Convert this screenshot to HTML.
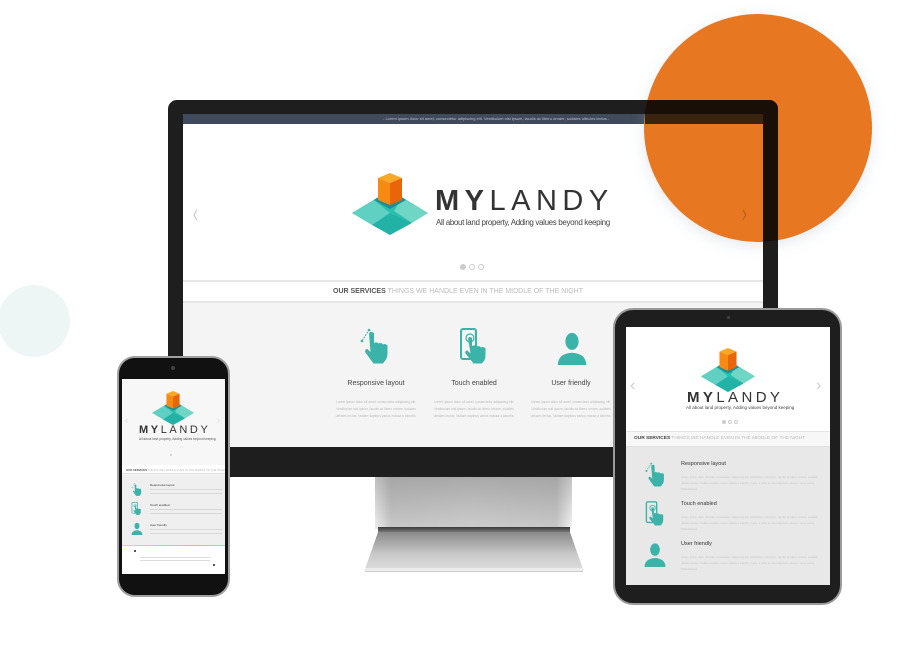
<!DOCTYPE html>
<html><head><meta charset="utf-8"><style>
*{margin:0;padding:0;box-sizing:border-box}
body{width:897px;height:648px;background:#fff;position:relative;overflow:hidden;font-family:"Liberation Sans",sans-serif}
.a{position:absolute}
.t{position:absolute;white-space:nowrap}
</style></head><body>
<svg width="0" height="0" style="position:absolute">
<defs>
<symbol id="logo" viewBox="0 0 76 62">
<polygon points="0,40 38,17 76,40 38,62" fill="#2bbfb0"/>
<polygon points="0,40 22,27 38,40 20,52" fill="#5fd0c1"/>
<polygon points="50,25 76,40 60,50 42,38" fill="#6fd6c6"/>
<polygon points="38,40 60,50 38,62 20,52" fill="#22b3a6"/>
<polygon points="22,27 38,17 54,27 38,36" fill="#1d8f93"/>
<polygon points="26,5 38,0 50,5 38,10" fill="#f9a825"/>
<polygon points="26,5 38,10 38,32 26,27" fill="#f68a12"/>
<polygon points="38,10 50,5 50,27 38,32" fill="#e8650a"/>
</symbol>
<symbol id="hand" viewBox="0 0 32 36">
<line x1="2" y1="13" x2="9" y2="2" stroke="#3bb3a9" stroke-width="1" stroke-dasharray="2 1"/>
<circle cx="2" cy="13" r="1.3" fill="#3bb3a9"/><circle cx="9" cy="2" r="1.3" fill="#3bb3a9"/>
<path d="M9 5 q2.5-2 5 0 v10 q2.5-1.5 4.5 0.5 q2.5-1.5 4.5 1 q2.5-1.5 4.5 1 v8 q0 6-5 10 h-9 q-3-4-8-11 q-1.5-3 2-3.5 l3 3 z" fill="#3bb3a9"/>
</symbol>
<symbol id="touch" viewBox="0 0 32 36">
<rect x="2" y="1" width="15" height="30" rx="2" fill="none" stroke="#3bb3a9" stroke-width="2"/>
<circle cx="11" cy="10" r="4" fill="none" stroke="#3bb3a9" stroke-width="1.2"/>
<path d="M9 10 q2-2 4 0 v8 q2.5-1.5 4.5 0.5 q2.5-1.5 4.5 1 q2.5-1.5 4.5 1 v7 q0 5-4 8 h-8 q-3-4-8-10 q-1-3 2-3 l3 3 z" fill="#3bb3a9"/>
</symbol>
<symbol id="user" viewBox="0 0 32 36">
<ellipse cx="16" cy="11" rx="7" ry="9" fill="#3bb3a9"/>
<path d="M1 36 q0-12 15-13 q15 1 15 13 z" fill="#3bb3a9"/>
</symbol>
</defs></svg>

<div class="a" style="left:-2px;top:285px;width:72px;height:72px;border-radius:50%;background:#eef6f5"></div>

<!-- MONITOR SCREEN -->
<div class="a" style="left:183px;top:114px;width:580px;height:333px;background:#fff;overflow:hidden">
  <div class="a" style="left:0;top:0;width:580px;height:10px;background:#3f4b5c"></div>
  <div class="t" style="left:200px;top:2px;font-size:4px;color:#b8c0ca">- Lorem ipsum dolor sit amet, consectetur adipiscing elit. Vestibulum nisl ipsum, iaculis ac libero ornare, sodales ultricies lectus -</div>
  <div class="t" style="left:8px;top:84px;font-size:26px;color:#cfcfcf;transform:scaleX(.6)">&lsaquo;</div>
  <svg class="a" style="left:169px;top:59px" width="76" height="62"><use href="#logo"/></svg>
  <div class="t" style="left:252px;top:73px;font-size:29px;letter-spacing:5.5px;color:#333;line-height:29px"><b>MY</b>LANDY</div>
  <div class="t" style="left:253px;top:104px;font-size:8px;color:#444;letter-spacing:-0.35px">All about land property, Adding values beyond keeping</div>
  <div class="a" style="left:277px;top:150px;width:6px;height:6px;border-radius:50%;background:#ccc"></div>
  <div class="a" style="left:286px;top:150px;width:6px;height:6px;border-radius:50%;border:1px solid #ccc"></div>
  <div class="a" style="left:295px;top:150px;width:6px;height:6px;border-radius:50%;border:1px solid #ccc"></div>
  <div class="a" style="left:0;top:166px;width:580px;height:2px;background:#e6e6e6"></div>
  <div class="t" style="left:150px;top:174px;font-size:7px;color:#555"><b>OUR SERVICES</b> <span style="color:#bbb">THINGS WE HANDLE EVEN IN THE MIDDLE OF THE NIGHT</span></div>
  <div class="a" style="left:0;top:187px;width:580px;height:146px;background:#f4f4f4;border-top:2px solid #e6e6e6"></div>
  <svg class="a" style="left:177px;top:214px" width="32" height="36"><use href="#hand"/></svg>
  <svg class="a" style="left:276px;top:214px" width="32" height="36"><use href="#touch"/></svg>
  <svg class="a" style="left:373px;top:217px" width="32" height="34"><use href="#user"/></svg>
  <div class="t" style="left:153px;top:266px;width:80px;text-align:center;font-size:7px;color:#444">Responsive layout</div>
  <div class="t" style="left:251px;top:266px;width:80px;text-align:center;font-size:7px;color:#444">Touch enabled</div>
  <div class="t" style="left:348px;top:266px;width:80px;text-align:center;font-size:7px;color:#444">User friendly</div>
  <div class="a" style="left:148px;top:285px;width:90px;font-size:3.3px;line-height:7px;color:#bbb;text-align:center">Lorem ipsum dolor sit amet, consectetur adipiscing elit. Vestibulum nisl ipsum, iaculis ac libero ornare, sodales ultricies lectus. Nullam dapibus varius massa a lobortis.</div>
  <div class="a" style="left:246px;top:285px;width:90px;font-size:3.3px;line-height:7px;color:#bbb;text-align:center">Lorem ipsum dolor sit amet, consectetur adipiscing elit. Vestibulum nisl ipsum, iaculis ac libero ornare, sodales ultricies lectus. Nullam dapibus varius massa a lobortis.</div>
  <div class="a" style="left:343px;top:285px;width:90px;font-size:3.3px;line-height:7px;color:#bbb;text-align:center">Lorem ipsum dolor sit amet, consectetur adipiscing elit. Vestibulum nisl ipsum, iaculis ac libero ornare, sodales ultricies lectus. Nullam dapibus varius massa a lobortis.</div>
</div>

<!-- orange circle -->
<div class="a" style="left:644px;top:14px;width:228px;height:228px;border-radius:50%;background:#e87722;box-shadow:0 4px 14px rgba(150,170,190,.25)"></div>
<!-- top bar tinted through circle -->
<div class="a" style="left:645px;top:114px;width:118px;height:10px;background:#3a2410;clip-path:circle(114px at 113px 14px)"></div>
<div class="t" style="left:740px;top:198px;font-size:26px;color:rgba(160,70,10,.5);transform:scaleX(.6)">&rsaquo;</div>

<!-- MONITOR FRAME on top -->
<div class="a" style="left:168px;top:100px;width:610px;height:377px;border:solid #1e1e1e;border-width:14px 15px 30px 15px;border-radius:9px 9px 0 0"></div>
<div class="a" style="left:645px;top:100px;width:133px;height:14px;background:#1a0f06;border-top-right-radius:9px;clip-path:circle(114px at 113px 28px)"></div>
<div class="a" style="left:763px;top:100px;width:15px;height:143px;background:#1a0f06;border-top-right-radius:9px;clip-path:circle(114px at -5px 28px)"></div>

<!-- stand -->
<div class="a" style="left:375px;top:477px;width:197px;height:52px;background:linear-gradient(90deg,#e8e8e8 0%,#b5b5b5 8%,#bdbdbd 50%,#b5b5b5 92%,#f0f0f0 100%)"></div>
<div class="a" style="left:375px;top:477px;width:197px;height:52px;background:linear-gradient(180deg,rgba(150,150,150,.5),rgba(255,255,255,.25))"></div>
<div class="a" style="left:378px;top:527px;width:192px;height:5px;background:linear-gradient(#3a3a3a,#777)"></div>
<div class="a" style="left:365px;top:532px;width:218px;height:37px;background:linear-gradient(180deg,#8a8a8a,#c9c9c9 60%,#dcdcdc);clip-path:polygon(6% 0,94% 0,100% 100%,0 100%)"></div>
<div class="a" style="left:365px;top:568px;width:218px;height:4px;background:#ececec;border-bottom:1px solid #ccc"></div>

<!-- TABLET -->
<div class="a" style="left:613px;top:308px;width:229px;height:297px;background:#1e1e1e;border-radius:20px;border:2px solid #9a9a9a"></div>
<div class="a" style="left:727px;top:316px;width:3px;height:3px;border-radius:50%;background:#444"></div>
<div class="a" style="left:626px;top:327px;width:204px;height:258px;background:#fff;overflow:hidden">
  <div class="t" style="left:4px;top:50px;font-size:16px;color:#ccc">&lsaquo;</div>
  <div class="t" style="left:190px;top:50px;font-size:16px;color:#ccc">&rsaquo;</div>
  <svg class="a" style="left:75px;top:21px" width="54" height="44"><use href="#logo"/></svg>
  <div class="t" style="left:61px;top:62px;font-size:15px;letter-spacing:3.4px;color:#333"><b>MY</b>LANDY</div>
  <div class="t" style="left:60px;top:78px;font-size:4.5px;color:#444">All about land property, Adding values beyond keeping</div>
  <div class="a" style="left:96px;top:93px;width:4px;height:4px;border-radius:50%;background:#ccc"></div>
  <div class="a" style="left:102px;top:93px;width:4px;height:4px;border-radius:50%;border:1px solid #ccc"></div>
  <div class="a" style="left:108px;top:93px;width:4px;height:4px;border-radius:50%;border:1px solid #ccc"></div>
  <div class="a" style="left:0;top:104px;width:204px;height:16px;background:#f7f7f7;border-top:1px solid #e4e4e4;border-bottom:1px solid #e0e0e0"></div>
  <div class="t" style="left:8px;top:109px;font-size:4.8px;color:#444"><b>OUR SERVICES</b> <span style="color:#bbb">THINGS WE HANDLE EVEN IN THE MIDDLE OF THE NIGHT</span></div>
  <div class="a" style="left:0;top:120px;width:204px;height:138px;background:#e8e8e8"></div>
  <svg class="a" style="left:19px;top:135px" width="22" height="25"><use href="#hand"/></svg>
  <svg class="a" style="left:19px;top:174px" width="22" height="25"><use href="#touch"/></svg>
  <svg class="a" style="left:17px;top:215px" width="24" height="25"><use href="#user"/></svg>
  <div class="t" style="left:55px;top:134px;font-size:5.5px;color:#333">Responsive layout</div>
  <div class="t" style="left:55px;top:174px;font-size:5.5px;color:#333">Touch enabled</div>
  <div class="t" style="left:55px;top:214px;font-size:5.5px;color:#333">User friendly</div>
  <div class="a" style="left:55px;top:147px;width:142px;font-size:2.8px;line-height:6px;color:#c6c6c6">Lorem ipsum dolor sit amet, consectetur adipiscing elit. Vestibulum nisl ipsum, iaculis ac libero ornare, sodales ultricies lectus. Nullam dapibus varius massa a lobortis. Fusce a dolor at urna dignissim tempor vel ac purus. Pellentesque</div>
  <div class="a" style="left:55px;top:187px;width:142px;font-size:2.8px;line-height:6px;color:#c6c6c6">Lorem ipsum dolor sit amet, consectetur adipiscing elit. Vestibulum nisl ipsum, iaculis ac libero ornare, sodales ultricies lectus. Nullam dapibus varius massa a lobortis. Fusce a dolor at urna dignissim tempor vel ac purus. Pellentesque</div>
  <div class="a" style="left:55px;top:227px;width:142px;font-size:2.8px;line-height:6px;color:#c6c6c6">Lorem ipsum dolor sit amet, consectetur adipiscing elit. Vestibulum nisl ipsum, iaculis ac libero ornare, sodales ultricies lectus. Nullam dapibus varius massa a lobortis. Fusce a dolor at urna dignissim tempor vel ac purus. Pellentesque</div>
</div>

<!-- PHONE -->
<div class="a" style="left:117px;top:356px;width:113px;height:241px;background:#111;border-radius:18px;border:2px solid #a0a0a0"></div>
<div class="a" style="left:171px;top:366px;width:4px;height:4px;border-radius:50%;background:#444"></div>
<div class="a" style="left:122px;top:379px;width:103px;height:195px;background:#f7f7f7;overflow:hidden">
  <div class="t" style="left:3px;top:36px;font-size:10px;color:#ddd">&lsaquo;</div>
  <div class="t" style="left:95px;top:36px;font-size:10px;color:#ddd">&rsaquo;</div>
  <svg class="a" style="left:29px;top:12px" width="44" height="34"><use href="#logo"/></svg>
  <div class="t" style="left:17px;top:45px;font-size:11px;letter-spacing:2.6px;color:#333"><b>MY</b>LANDY</div>
  <div class="t" style="left:17px;top:58px;font-size:3.2px;color:#555">All about land property, Adding values beyond keeping</div>
  <div class="a" style="left:48px;top:75px;width:2px;height:2px;border-radius:50%;background:#ccc"></div>
  <div class="a" style="left:0;top:86px;width:103px;height:9px;background:#fff;border-bottom:1px solid #ddd"></div>
  <div class="t" style="left:4px;top:89px;font-size:2.8px;color:#555"><b>OUR SERVICES</b> <span style="color:#bbb">THINGS WE HANDLE EVEN IN THE MIDDLE OF THE NIGHT</span></div>
  <div class="a" style="left:0;top:96px;width:103px;height:70px;background:#efefef"></div>
  <svg class="a" style="left:9px;top:104px" width="12" height="13"><use href="#hand"/></svg>
  <svg class="a" style="left:9px;top:123px" width="12" height="13"><use href="#touch"/></svg>
  <svg class="a" style="left:9px;top:143px" width="12" height="13"><use href="#user"/></svg>
  <div class="t" style="left:28px;top:104px;font-size:3px;color:#333">Responsive layout</div>
  <div class="t" style="left:28px;top:124px;font-size:3px;color:#333">Touch enabled</div>
  <div class="t" style="left:28px;top:144px;font-size:3px;color:#333">User friendly</div>
  <div class="a" style="left:28px;top:110px;width:72px;height:1px;background:#d8d8d8"></div>
  <div class="a" style="left:28px;top:114px;width:72px;height:1px;background:#d8d8d8"></div>
  <div class="a" style="left:28px;top:130px;width:72px;height:1px;background:#d8d8d8"></div>
  <div class="a" style="left:28px;top:134px;width:72px;height:1px;background:#d8d8d8"></div>
  <div class="a" style="left:28px;top:150px;width:72px;height:1px;background:#d8d8d8"></div>
  <div class="a" style="left:28px;top:154px;width:72px;height:1px;background:#d8d8d8"></div>
  <div class="a" style="left:0;top:166px;width:103px;height:1px;background:linear-gradient(90deg,#f3d36a,#9ddca8,#d9a8d8,#9fc9ef)"></div>
  <div class="a" style="left:0;top:167px;width:103px;height:28px;background:#fff"></div>
  <div class="a" style="left:12px;top:171px;width:2px;height:2px;background:#555"></div>
  <div class="a" style="left:18px;top:178px;width:70px;height:1px;background:#ddd"></div>
  <div class="a" style="left:18px;top:181px;width:70px;height:1px;background:#ddd"></div>
  <div class="a" style="left:91px;top:185px;width:2px;height:2px;background:#555"></div>
</div>
</body></html>
